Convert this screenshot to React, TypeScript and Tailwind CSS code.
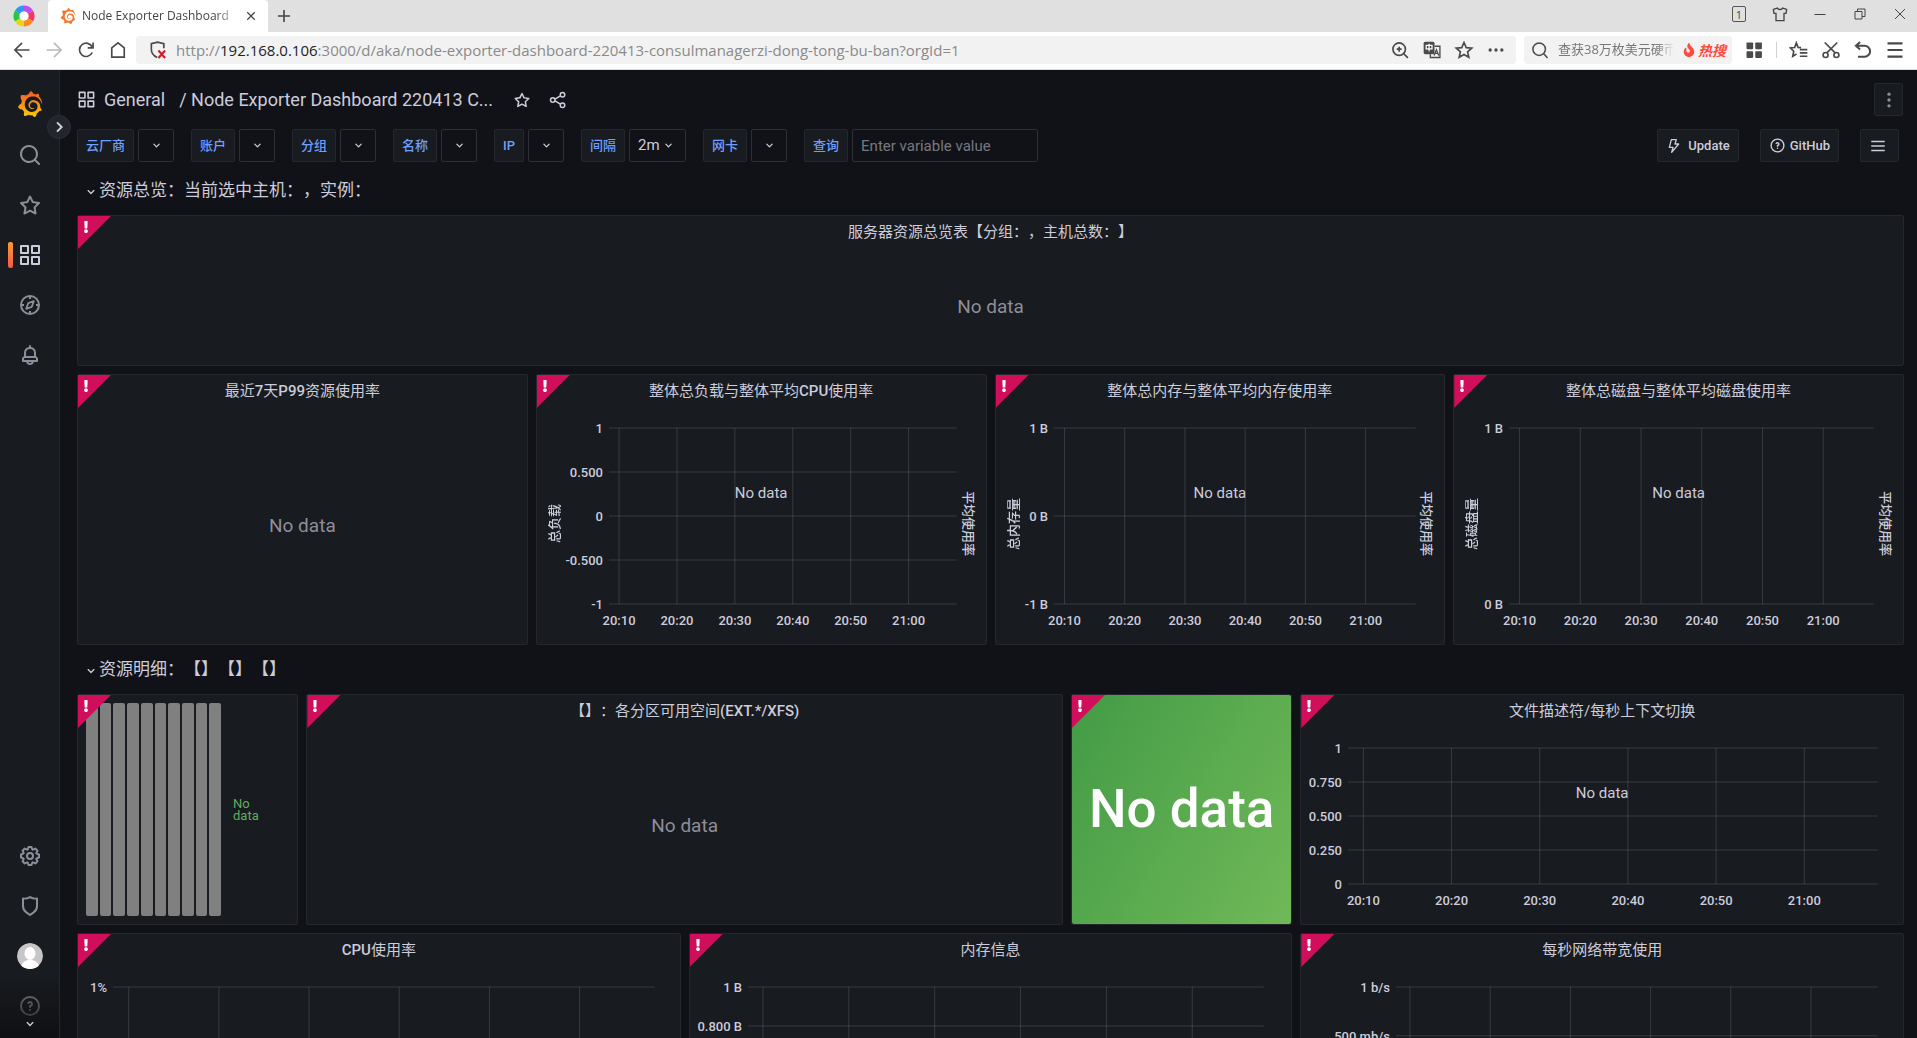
import type { ReactNode } from "react";
import { SiGrafana } from "react-icons/si";
import { FaExclamation, FaFire } from "react-icons/fa";

const paths = {
  apps: "M10,13H3a1,1,0,0,0-1,1v7a1,1,0,0,0,1,1h7a1,1,0,0,0,1-1V14A1,1,0,0,0,10,13ZM9,20H4V15H9ZM21,2H14a1,1,0,0,0-1,1v7a1,1,0,0,0,1,1h7a1,1,0,0,0,1-1V3A1,1,0,0,0,21,2ZM20,9H15V4h5Zm1,4H14a1,1,0,0,0-1,1v7a1,1,0,0,0,1,1h7a1,1,0,0,0,1-1V14A1,1,0,0,0,21,13Zm-1,7H15V15h5ZM10,2H3A1,1,0,0,0,2,3v7a1,1,0,0,0,1,1h7a1,1,0,0,0,1-1V3A1,1,0,0,0,10,2ZM9,9H4V4H9Z",
  search: "M21.71,20.29,18,16.61A9,9,0,1,0,16.61,18l3.68,3.68a1,1,0,0,0,1.42,0A1,1,0,0,0,21.71,20.29ZM11,18a7,7,0,1,1,7-7A7,7,0,0,1,11,18Z",
  star: "M22,9.67A1,1,0,0,0,21.14,9l-5.69-.83L12.9,3a1,1,0,0,0-1.8,0L8.55,8.16,2.86,9a1,1,0,0,0-.81.68,1,1,0,0,0,.25,1l4.13,4-1,5.68A1,1,0,0,0,6.9,21.44L12,18.77l5.1,2.67a.93.93,0,0,0,.46.12,1,1,0,0,0,.59-.19,1,1,0,0,0,.4-1l-1-5.68,4.13-4A1,1,0,0,0,22,9.67Zm-6.15,4a1,1,0,0,0-.29.88l.72,4.2-3.76-2a1.06,1.06,0,0,0-.94,0l-3.76,2,.72-4.2a1,1,0,0,0-.29-.88l-3-3,4.21-.61a1,1,0,0,0,.76-.55L12,5.7l1.88,3.82a1,1,0,0,0,.76.55l4.21.61Z",
  bell: "M18,13.18V10a6,6,0,0,0-5-5.91V3a1,1,0,0,0-2,0V4.09A6,6,0,0,0,6,10v3.18A3,3,0,0,0,4,16v2a1,1,0,0,0,1,1H8.14a4,4,0,0,0,7.72,0H19a1,1,0,0,0,1-1V16A3,3,0,0,0,18,13.18ZM8,10a4,4,0,0,1,8,0v3H8Zm4,10a2,2,0,0,1-1.72-1h3.44A2,2,0,0,1,12,20Zm6-3H6V16a1,1,0,0,1,1-1H17a1,1,0,0,1,1,1Z",
  cog: "M21.32,9.55l-1.89-.63.89-1.78A1,1,0,0,0,20.13,6L18,3.87a1,1,0,0,0-1.15-.19l-1.78.89-.63-1.89A1,1,0,0,0,13.5,2h-3a1,1,0,0,0-.95.68L8.92,4.57,7.14,3.68A1,1,0,0,0,6,3.87L3.87,6a1,1,0,0,0-.19,1.15l.89,1.78-1.89.63A1,1,0,0,0,2,10.5v3a1,1,0,0,0,.68.95l1.89.63-.89,1.78A1,1,0,0,0,3.87,18L6,20.13a1,1,0,0,0,1.15.19l1.78-.89.63,1.89a1,1,0,0,0,.95.68h3a1,1,0,0,0,.95-.68l.63-1.89,1.78.89A1,1,0,0,0,18,20.13L20.13,18a1,1,0,0,0,.19-1.15l-.89-1.78,1.89-.63A1,1,0,0,0,22,13.5v-3A1,1,0,0,0,21.32,9.55ZM20,12.78l-1.2.4A2,2,0,0,0,17.64,16l.57,1.14-1.1,1.1L16,17.64a2,2,0,0,0-2.79,1.16l-.4,1.2H11.22l-.4-1.2A2,2,0,0,0,8,17.64l-1.14.57-1.1-1.1L6.36,16A2,2,0,0,0,5.2,13.18L4,12.78V11.22l1.2-.4A2,2,0,0,0,6.36,8L5.79,6.89l1.1-1.1L8,6.36A2,2,0,0,0,10.82,5.2l.4-1.2h1.56l.4,1.2A2,2,0,0,0,16,6.36l1.14-.57,1.1,1.1L17.64,8a2,2,0,0,0,1.16,2.79l1.2.4ZM12,8a4,4,0,1,0,4,4A4,4,0,0,0,12,8Zm0,6a2,2,0,1,1,2-2A2,2,0,0,1,12,14Z",
  shield: "M19.63,3.65a1,1,0,0,0-.84-.2,8,8,0,0,1-6.22-1.27,1,1,0,0,0-1.14,0A8,8,0,0,1,5.21,3.45a1,1,0,0,0-.84.2A1,1,0,0,0,4,4.43v7.45a9,9,0,0,0,3.77,7.33l3.65,2.6a1,1,0,0,0,1.16,0l3.65-2.6A9,9,0,0,0,20,11.88V4.43A1,1,0,0,0,19.63,3.65ZM18,11.88a7,7,0,0,1-2.93,5.7L12,19.77,8.93,17.58A7,7,0,0,1,6,11.88V5.58a10,10,0,0,0,6-1.39,10,10,0,0,0,6,1.39Z",
  help: "M11.29,15.29a1.58,1.58,0,0,0-.12.15.76.76,0,0,0-.09.18.64.64,0,0,0-.06.18,1.36,1.36,0,0,0,0,.2.84.84,0,0,0,.08.38.9.9,0,0,0,.54.54.94.94,0,0,0,.76,0,.9.9,0,0,0,.54-.54A1,1,0,0,0,13,16a1,1,0,0,0-.29-.71A1,1,0,0,0,11.29,15.29ZM12,2A10,10,0,1,0,22,12,10,10,0,0,0,12,2Zm0,18a8,8,0,1,1,8-8A8,8,0,0,1,12,20ZM12,7A3,3,0,0,0,9.4,8.5a1,1,0,1,0,1.73,1A1,1,0,0,1,12,9a1,1,0,0,1,0,2,1,1,0,0,0-1,1v1a1,1,0,0,0,2,0v-.18A3,3,0,0,0,12,7Z",
  down: "M17,9.17a1,1,0,0,0-1.41,0L12,12.71,8.46,9.17a1,1,0,0,0-1.41,0,1,1,0,0,0,0,1.42l4.24,4.24a1,1,0,0,0,1.42,0L17,10.59A1,1,0,0,0,17,9.17Z",
};

function Icon({ name, className = "size-6" }: { name: keyof typeof paths; className?: string }) {
  return (
    <svg viewBox="0 0 24 24" fill="currentColor" className={className} aria-hidden="true">
      <path d={paths[name]} />
    </svg>
  );
}

function Stroke({ children, className = "size-5", width = 2 }: { children: ReactNode; className?: string; width?: number }) {
  return (
    <svg
      viewBox="0 0 24 24"
      fill="none"
      stroke="currentColor"
      strokeWidth={width}
      className={className}
      aria-hidden="true"
    >
      {children}
    </svg>
  );
}

/* ---------- Browser window ---------- */

function TabStrip() {
  return (
    <div className="flex h-8 items-center bg-[#e0e0e0] text-[#444]">
      <div className="flex w-12 justify-center">
        <svg viewBox="0 0 24 24" className="size-6" aria-hidden="true">
          <g fill="none" strokeWidth="6">
            <path d="M12 4.5a7.5 7.5 0 0 1 6.5 3.7" stroke="#c04df0" />
            <path d="M18.5 8.2a7.5 7.5 0 0 1 0 7.6" stroke="#f2356b" />
            <path d="M18.5 15.8A7.5 7.5 0 0 1 12 19.500" stroke="#fb8a1e" />
            <path d="M12 19.500a7.500 7.500 0 0 1-6.500-3.700" stroke="#e6d51c" />
            <path d="M5.500 15.800a7.500 7.500 0 0 1 0-7.600" stroke="#25c93f" />
            <path d="M5.500 8.200A7.500 7.500 0 0 1 12 4.500" stroke="#2b9af3" />
          </g>
          <circle cx="12" cy="12" r="4.500" fill="#fff" />
        </svg>
      </div>
      <div className="flex h-8 w-[220px] items-center rounded-t bg-white pr-2.5 pl-3">
        <SiGrafana className="size-4 shrink-0 fill-[#f2762e]" />
        <span className="ml-1.5 w-[158px] overflow-hidden text-[12px] whitespace-nowrap [mask-image:linear-gradient(to_right,#000_85%,transparent)]">
          Node Exporter Dashboard
        </span>
        <button aria-label="Close tab" className="ml-1.5">
          <Stroke className="size-2.5" width={3}>
            <path d="M3 3l18 18M21 3L3 21" />
          </Stroke>
        </button>
      </div>
      <button aria-label="New tab" className="ml-2">
        <Stroke className="size-4" width={2.4}>
          <path d="M12 3v18M3 12h18" />
        </Stroke>
      </button>
      <div className="ml-auto flex items-center gap-5 pr-[7px] pb-1">
        <span className="mr-1 flex h-4 w-[14px] items-center justify-center rounded-xs border border-[#555] text-[11px] leading-none">1</span>
        <div className="flex w-5 justify-center">
          <Stroke className="size-4">
            <path d="M8 3c1 3 7 3 8 0l6 2-1 6h-3v11H6V11H3L2 5z" />
          </Stroke>
        </div>
        <button aria-label="Minimize" className="flex w-5 justify-center">
          <Stroke className="size-3">
            <path d="M1 13h22" />
          </Stroke>
        </button>
        <button aria-label="Restore" className="flex w-5 justify-center">
          <Stroke className="size-3">
            <path d="M2 7h14v15H2zM7 7V2h15v15h-6" />
          </Stroke>
        </button>
        <button aria-label="Close" className="flex w-5 justify-center">
          <Stroke className="size-3">
            <path d="M2 2l20 20M22 2L2 22" />
          </Stroke>
        </button>
      </div>
    </div>
  );
}

function Toolbar() {
  return (
    <div className="flex h-[38px] items-center border-b border-[#dcdcdc] bg-white pr-3 pb-px pl-3 text-[#4a4a4a]">
      <div className="flex items-center gap-3">
        <button aria-label="Back">
          <Stroke>
            <path d="M21 12H4M12 3.500L3.500 12l8.500 8.500" />
          </Stroke>
        </button>
        <button aria-label="Forward" className="text-[#b9b9b9]">
          <Stroke>
            <path d="M3 12h17M12 3.500l8.500 8.500-8.500 8.500" />
          </Stroke>
        </button>
        <button aria-label="Reload">
          <Stroke>
            <path d="M19.500 15a8 8 0 1 1 0-6.500M20.500 3v6.500H14" />
          </Stroke>
        </button>
        <button aria-label="Home">
          <Stroke>
            <path d="M4.500 20.500V9.500L12 3.500l7.500 6v11z" />
          </Stroke>
        </button>
      </div>
      <div className="ml-2 flex h-7 flex-1 items-center rounded bg-[#f2f2f2] px-2.5">
        <svg viewBox="0 0 24 24" fill="none" className="ml-0.5 size-5 shrink-0" aria-hidden="true">
          <path d="M11 21C6 18.500 4 15 4 11V4.500l7.500-2 7.500 2V10" stroke="#4a4a4a" strokeWidth="2" />
          <path d="M12.500 12.500l8 9M20.500 12.500l-8 9" stroke="#d0202e" strokeWidth="2.600" />
        </svg>
        <div
          role="textbox"
          aria-label="Address"
          className="ml-2 flex-1 text-[15px] whitespace-nowrap text-[#8a8a8a]"
        >
          http://<span className="text-[#222]">192.168.0.106</span>
          :3000/d/aka/node-exporter-dashboard-220413-consulmanagerzi-dong-tong-bu-ban?orgId=1
        </div>
        <div className="flex items-center gap-3">
          <button aria-label="Zoom">
            <Stroke>
              <circle cx="11" cy="11" r="7.500" />
              <path d="M16.500 16.500l5 5M11 8v6M8 11h6" />
            </Stroke>
          </button>
          <button aria-label="Translate">
            <svg viewBox="0 0 24 24" className="size-5" aria-hidden="true">
              <rect x="2" y="2" width="13" height="15" rx="2" fill="#4a4a4a" />
              <path d="M5 6.500h7v4H5zM8.500 4.500v9" fill="none" stroke="#fff" strokeWidth="1.500" />
              <path d="M15 7.500h6.500v13.500H10V17" fill="none" stroke="#4a4a4a" strokeWidth="1.600" />
              <path d="M14.500 18.500l2.800-7 2.800 7M15.500 16h3.600" fill="none" stroke="#4a4a4a" strokeWidth="1.500" />
            </svg>
          </button>
          <button aria-label="Bookmark">
            <Stroke>
              <path d="M12 3l2.700 6.200 6.600.6-5 4.400 1.500 6.600L12 17.300l-5.800 3.500 1.500-6.600-5-4.400 6.600-.6z" />
            </Stroke>
          </button>
          <button aria-label="More">
            <svg viewBox="0 0 24 24" fill="#4a4a4a" className="size-5" aria-hidden="true">
              <circle cx="5" cy="12" r="2" />
              <circle cx="12" cy="12" r="2" />
              <circle cx="19" cy="12" r="2" />
            </svg>
          </button>
        </div>
      </div>
      <div className="ml-2 flex h-7 w-[208px] items-center rounded bg-[#f2f2f2] pr-1.5 pl-1.5">
        <Stroke className="size-5 shrink-0" width={1.8}>
          <circle cx="11" cy="11" r="7.500" />
          <path d="M16.500 16.500l4.500 5" />
        </Stroke>
        <input
          aria-label="Search"
          placeholder="查获38万枚美元硬币"
          className="ml-2 min-w-0 flex-1 bg-transparent text-[13px] outline-none [mask-image:linear-gradient(to_right,#000_85%,transparent)] placeholder:text-[#777]"
        />
        <a
          href="#hot"
          className="ml-2 flex shrink-0 items-center gap-0.5 text-[14px] font-bold whitespace-nowrap text-[#ff4a3d] italic"
        >
          <FaFire className="size-3.5" />
          热搜
        </a>
      </div>
      <div className="ml-3 flex items-center gap-3">
        <button aria-label="Apps">
          <svg viewBox="0 0 24 24" fill="#4a4a4a" className="size-5" aria-hidden="true">
            <rect x="3" y="3" width="8" height="8" rx="1" />
            <rect x="13.500" y="3" width="8" height="8" rx="1" />
            <rect x="3" y="13.500" width="8" height="8" rx="1" />
            <rect x="13.500" y="13.500" width="8" height="8" rx="1" />
          </svg>
        </button>
        <div className="h-4 w-px bg-[#d0d0d0]" />
        <button aria-label="Favorites">
          <Stroke>
            <path d="M14.500 9.200L11 9 8.800 3.500 6.800 9l-5 .6 3.900 3.900-1.200 6L9 16.800M13 11.500h9M13 15.500h9M13 19.500h9" />
          </Stroke>
        </button>
        <button aria-label="Screenshot">
          <Stroke>
            <circle cx="5.500" cy="18" r="3" />
            <circle cx="18.500" cy="18" r="3" />
            <path d="M4.500 3L17 15.500M19.500 3L7 15.500" />
          </Stroke>
        </button>
        <button aria-label="Undo">
          <Stroke width={2.4}>
            <path d="M8.500 2.500L3.500 7l5 4.500M4 7h10a6.500 6.500 0 0 1 0 13H6" />
          </Stroke>
        </button>
        <button aria-label="Menu">
          <Stroke width={2.6}>
            <path d="M3 4h18M3 12h18M3 20h18" />
          </Stroke>
        </button>
      </div>
    </div>
  );
}

/* ---------- Side menu ---------- */

function SideItem({ label, active, children }: { label: string; active?: boolean; children: ReactNode }) {
  return (
    <a
      href="#nav"
      aria-label={label}
      className={`relative flex h-[50px] w-full items-center justify-center ${active ? "text-[#ccccdc]" : "text-[#8e8e9a]"}`}
    >
      {active && (
        <span className="absolute left-2 h-[26px] w-[5px] rounded-xs bg-gradient-to-b from-[#ff9939] to-[#f05a40]" />
      )}
      {children}
    </a>
  );
}

function SideMenu() {
  return (
    <nav className="relative flex w-[60px] shrink-0 flex-col items-center border-r border-[#25272c] bg-[#181b1f] pt-2">
      <svg className="absolute size-0" aria-hidden="true">
        <linearGradient id="brand" x1="0" y1="0" x2="0" y2="1">
          <stop offset="0" stopColor="#f05a28" />
          <stop offset="1" stopColor="#fbca0a" />
        </linearGradient>
      </svg>
      <a href="#home" aria-label="Home" className="flex h-[52px] items-center">
        <SiGrafana className="size-[26px]" fill="url(#brand)" />
      </a>
      <SideItem label="Search">
        <Icon name="search" />
      </SideItem>
      <SideItem label="Starred">
        <Icon name="star" />
      </SideItem>
      <SideItem label="Dashboards" active>
        <Icon name="apps" />
      </SideItem>
      <SideItem label="Explore">
        <Stroke className="size-6">
          <circle cx="12" cy="12" r="9" />
          <path d="M12 3v3M12 18v3M3 12h3M18 12h3" />
          <path d="M15.800 8.200l-2 5.600-5.600 2 2-5.600z" strokeWidth="1.800" strokeLinejoin="round" />
        </Stroke>
      </SideItem>
      <SideItem label="Alerting">
        <Icon name="bell" />
      </SideItem>
      <div className="flex-1" />
      <SideItem label="Configuration">
        <Icon name="cog" />
      </SideItem>
      <SideItem label="Server Admin">
        <Icon name="shield" />
      </SideItem>
      <SideItem label="Profile">
        <svg viewBox="0 0 26 26" className="size-[26px] rounded-full" aria-hidden="true">
          <circle cx="13" cy="13" r="13" fill="#c6c6c6" />
          <ellipse cx="13" cy="10.500" rx="5.500" ry="6.500" fill="#fff" />
          <path d="M4 26c0-7 4-9 9-9s9 2 9 9z" fill="#fff" />
        </svg>
      </SideItem>
      <SideItem label="Help">
        <Icon name="help" />
      </SideItem>
      <div className="h-[7px]" />
      <div className="absolute inset-x-0 bottom-0 flex h-16 items-end justify-center bg-gradient-to-t from-[#0f1013] to-transparent pb-1.5">
        <Icon name="down" className="size-4 text-[#ccccdc]" />
      </div>
      <button
        aria-label="Expand menu"
        className="absolute top-[45px] -right-3 z-10 flex size-6 items-center justify-center rounded-full border border-[#2c2f36] bg-[#22252b] text-[#ccccdc]"
      >
        <Stroke className="size-4" width={3}>
          <path d="M9 5l7 7-7 7" />
        </Stroke>
      </button>
    </nav>
  );
}

/* ---------- Dashboard header ---------- */

const variables = [
  { id: "vendor", label: "云厂商" },
  { id: "account", label: "账户" },
  { id: "group", label: "分组" },
  { id: "name", label: "名称" },
  { id: "ip", label: "IP" },
  { id: "interval", label: "间隔", value: "2m" },
  { id: "nic", label: "网卡" },
];

const labelStyle =
  "flex h-[33px] items-center rounded-xs border border-[#25272c] bg-[#181b1f] px-2 text-[13px] font-medium text-[#6e9fff]";
const buttonStyle =
  "flex h-[33px] items-center rounded-xs border border-[#25272c] bg-[#181b1f] text-[13px] font-medium text-[#ccccdc]";

function Header() {
  return (
    <header>
      <div className="flex h-[59px] items-center pr-3.5 pl-[17px] text-[18px]">
        <Icon name="apps" className="size-[19px]" />
        <a href="#general" className="ml-2">
          General
        </a>
        <h1 className="ml-3.5">/ Node Exporter Dashboard 220413 C...</h1>
        <button aria-label="Mark as favorite" className="ml-5">
          <Icon name="star" className="size-[18px]" />
        </button>
        <button aria-label="Share dashboard" className="ml-[18px]">
          <Stroke className="size-[18px]">
            <circle cx="5" cy="12" r="3" />
            <circle cx="18" cy="5" r="3" />
            <circle cx="18" cy="19" r="3" />
            <path d="M8 10.800L15.200 6.500M8 13.200l7.200 4.300" />
          </Stroke>
        </button>
        <button aria-label="More options" className={`${buttonStyle} ml-auto w-[29px] justify-center`}>
          <svg viewBox="0 0 24 24" fill="#8e8e9a" className="size-5" aria-hidden="true">
            <circle cx="12" cy="5" r="2" />
            <circle cx="12" cy="12" r="2" />
            <circle cx="12" cy="19" r="2" />
          </svg>
        </button>
      </div>
      <div className="flex items-center pr-[18px] pl-[17px]">
        <div className="flex flex-wrap gap-[17px]">
          {variables.map((v) => (
            <div key={v.id} className="flex gap-1">
              <label htmlFor={v.id} className={labelStyle}>
                {v.label}
              </label>
              <div className="relative">
                <select
                  id={v.id}
                  className={`h-[33px] appearance-none rounded-xs border border-[#2d2f35] bg-[#111217] pl-2 text-[15px] outline-none ${v.value ? "w-[57px]" : "w-9"}`}
                >
                  <option>{v.value ?? ""}</option>
                </select>
                <Icon
                  name="down"
                  className="pointer-events-none absolute top-[9px] right-2.5 size-[15px]"
                />
              </div>
            </div>
          ))}
          <div className="flex gap-1">
            <label htmlFor="query" className={labelStyle}>
              查询
            </label>
            <input
              id="query"
              placeholder="Enter variable value"
              className="h-[33px] w-[186px] rounded-xs border border-[#2d2f35] bg-[#111217] px-2 text-[15px] outline-none placeholder:text-[#77787f]"
            />
          </div>
        </div>
        <div className="ml-auto flex gap-[21px]">
          <a href="#update" className={`${buttonStyle} gap-1.5 px-2`}>
            <Stroke className="size-4">
              <path d="M8 2.500h7.500L13.500 9H19L8.500 21.500 10.500 14H5z" strokeLinejoin="round" />
            </Stroke>
            Update
          </a>
          <a href="#github" className={`${buttonStyle} gap-1 px-2`}>
            <Icon name="help" className="size-[17px]" />
            GitHub
          </a>
          <button aria-label="Dashboard links" className={`${buttonStyle} w-[39px] pl-2`}>
            <Stroke className="size-[18px]">
              <path d="M3 6h18M3 12h18M3 18h18" />
            </Stroke>
          </button>
        </div>
      </div>
    </header>
  );
}

/* ---------- Panels ---------- */

function Corner() {
  return (
    <div className="absolute top-0 left-0 z-10 size-[33px] bg-[#d10e5c] [clip-path:polygon(0_0,100%_0,0_100%)]">
      <FaExclamation className="mt-[5px] ml-0.5 size-3 text-white" />
    </div>
  );
}

function Panel({ title, className, children }: { title?: string; className: string; children: ReactNode }) {
  return (
    <section className={`relative flex min-h-0 flex-col rounded-xs border border-[#25272c] bg-[#181b1f] ${className}`}>
      <Corner />
      {title && (
        <h2 className="h-[33px] shrink-0 text-center text-[15px] leading-8">
          {/* Latin runs are a step heavier than the Chinese ones */}
          {title.split(/([A-Z0-9(][\x21-\x7e]*)/).map((part, i) => (
            <span key={i} className={i % 2 ? "font-medium" : "font-normal"}>
              {part}
            </span>
          ))}
        </h2>
      )}
      {children}
    </section>
  );
}

function NoData() {
  return <div className="flex flex-1 items-center justify-center pt-px text-[19px] text-[#8e8e9a]">No data</div>;
}

const times = ["20:10", "20:20", "20:30", "20:40", "20:50", "21:00"];

type ChartProps = {
  yTicks: string[];
  plot: string;
  left?: string;
  right?: string;
};

function Chart({ yTicks, plot, left, right }: ChartProps) {
  const axisName =
    "w-4 shrink-0 self-center text-[13px] leading-4 font-medium whitespace-nowrap [writing-mode:vertical-rl] [text-orientation:sideways]";

  return (
    <div className={`relative flex min-h-0 flex-1 pb-1 ${left ? "px-2.5" : ""}`}>
      {left && <div className={`${axisName} rotate-180`}>{left}</div>}
      <div className={`mt-5 mb-9 min-h-0 flex-1 ${plot}`}>
        <svg className="size-full overflow-visible" aria-hidden="true">
          {yTicks.map((tick, i) => {
            const y = `${(i / (yTicks.length - 1)) * 100}%`;
            return (
              <g key={tick}>
                <line x1="0" x2="100%" y1={y} y2={y} stroke="#f0faff" strokeOpacity="0.14" />
                <text x="-6" y={y} dy="5" textAnchor="end" fontSize="13" fontWeight="500" fill="#ccccdc">
                  {tick}
                </text>
              </g>
            );
          })}
          {times.map((time, i) => {
            const x = `${2.9 + i * 16.65}%`;
            return (
              <g key={time}>
                <line x1={x} x2={x} y1="0" y2="100%" stroke="#f0faff" strokeOpacity="0.14" />
                <text x={x} y="100%" dy="21" textAnchor="middle" fontSize="13" fontWeight="500" fill="#ccccdc">
                  {time}
                </text>
              </g>
            );
          })}
        </svg>
      </div>
      {right && <div className={axisName}>{right}</div>}
      <div className="absolute inset-x-0 top-0 bottom-[66px] flex items-center justify-center text-[15px]">No data</div>
    </div>
  );
}

function RowTitle({ children }: { children: ReactNode }) {
  return (
    <button className="flex h-[33px] items-center pt-px pl-1.5 text-[17px]">
      <Icon name="down" className="mt-0.5 size-4" />
      {children}
    </button>
  );
}

const grid = "grid grid-cols-[repeat(24,minmax(0,1fr))] grid-rows-[minmax(0,1fr)] gap-2";

export default function App() {
  return (
    <div className="flex h-screen flex-col overflow-hidden bg-[#111217] font-['Roboto','Noto_Sans_CJK_SC',sans-serif] text-[#ccccdc] [text-spacing-trim:space-all]">
      <div className="font-['Open_Sans','Noto_Sans_CJK_SC',sans-serif]">
        <TabStrip />
        <Toolbar />
      </div>
      <div className="flex min-h-0 flex-1">
        <SideMenu />
        <main className="min-w-0 flex-1 overflow-x-hidden overflow-y-auto [scrollbar-width:none]">
          <Header />
          <div className="mt-3 flex flex-col gap-2 pr-[13px] pl-[17px]">
            <RowTitle>资源总览：当前选中主机：，实例：</RowTitle>
            <Panel title="服务器资源总览表【分组：，主机总数：】" className="h-[151px]">
              <NoData />
            </Panel>
            <div className={`${grid} h-[271px]`}>
              <Panel title="最近7天P99资源使用率" className="col-span-6">
                <NoData />
              </Panel>
              <Panel title="整体总负载与整体平均CPU使用率" className="col-span-6">
                <Chart
                  yTicks={["1", "0.500", "0", "-0.500", "-1"]}
                  plot="ml-[46px] mr-[3px]"
                  left="总负载"
                  right="平均使用率"
                />
              </Panel>
              <Panel title="整体总内存与整体平均内存使用率" className="col-span-6">
                <Chart yTicks={["1 B", "0 B", "-1 B"]} plot="ml-8 mr-[3px]" left="总内存量" right="平均使用率" />
              </Panel>
              <Panel title="整体总磁盘与整体平均磁盘使用率" className="col-span-6">
                <Chart yTicks={["1 B", "0 B"]} plot="ml-[29px] mr-[3px]" left="总磁盘量" right="平均使用率" />
              </Panel>
            </div>
            <RowTitle>资源明细：【】【】【】</RowTitle>
            <div className={`${grid} h-[231px]`}>
              <Panel className="col-span-3">
                <div className="flex min-h-0 flex-1 items-center py-2 pl-2">
                  <div className="flex h-full w-[135px] gap-0.5">
                    {Array.from({ length: 10 }, (_, i) => (
                      <div key={i} className="flex-1 rounded-xs bg-[#808080]" />
                    ))}
                  </div>
                  <div className="ml-3 w-8 text-[13px] leading-3 text-[#5fae5c]">No data</div>
                </div>
              </Panel>
              <Panel title="【】：各分区可用空间(EXT.*/XFS)" className="col-span-10">
                <NoData />
              </Panel>
              <Panel className="col-span-3">
                <div className="flex flex-1 items-center justify-center rounded-xs bg-[linear-gradient(120deg,#439b46,#70b958)] text-[53px] font-medium text-white">
                  No data
                </div>
              </Panel>
              <Panel title="文件描述符/每秒上下文切换" className="col-span-8">
                <Chart yTicks={["1", "0.750", "0.500", "0.250", "0"]} plot="ml-[47px] mr-[25px]" />
              </Panel>
            </div>
            <div className={`${grid} h-[290px]`}>
              <Panel title="CPU使用率" className="col-span-8">
                <Chart yTicks={["1%", "0.5%", "0%"]} plot="ml-[35px] mr-[25px]" />
              </Panel>
              <Panel title="内存信息" className="col-span-8">
                <Chart
                  yTicks={["1 B", "0.800 B", "0.600 B", "0.400 B", "0.200 B", "0 B"]}
                  plot="ml-[58px] mr-[28px]"
                />
              </Panel>
              <Panel title="每秒网络带宽使用" className="col-span-8">
                <Chart yTicks={["1 b/s", "500 mb/s", "0 b/s", "-500 mb/s", "-1 b/s"]} plot="ml-[95px] mr-[25px]" />
              </Panel>
            </div>
          </div>
        </main>
      </div>
    </div>
  );
}
